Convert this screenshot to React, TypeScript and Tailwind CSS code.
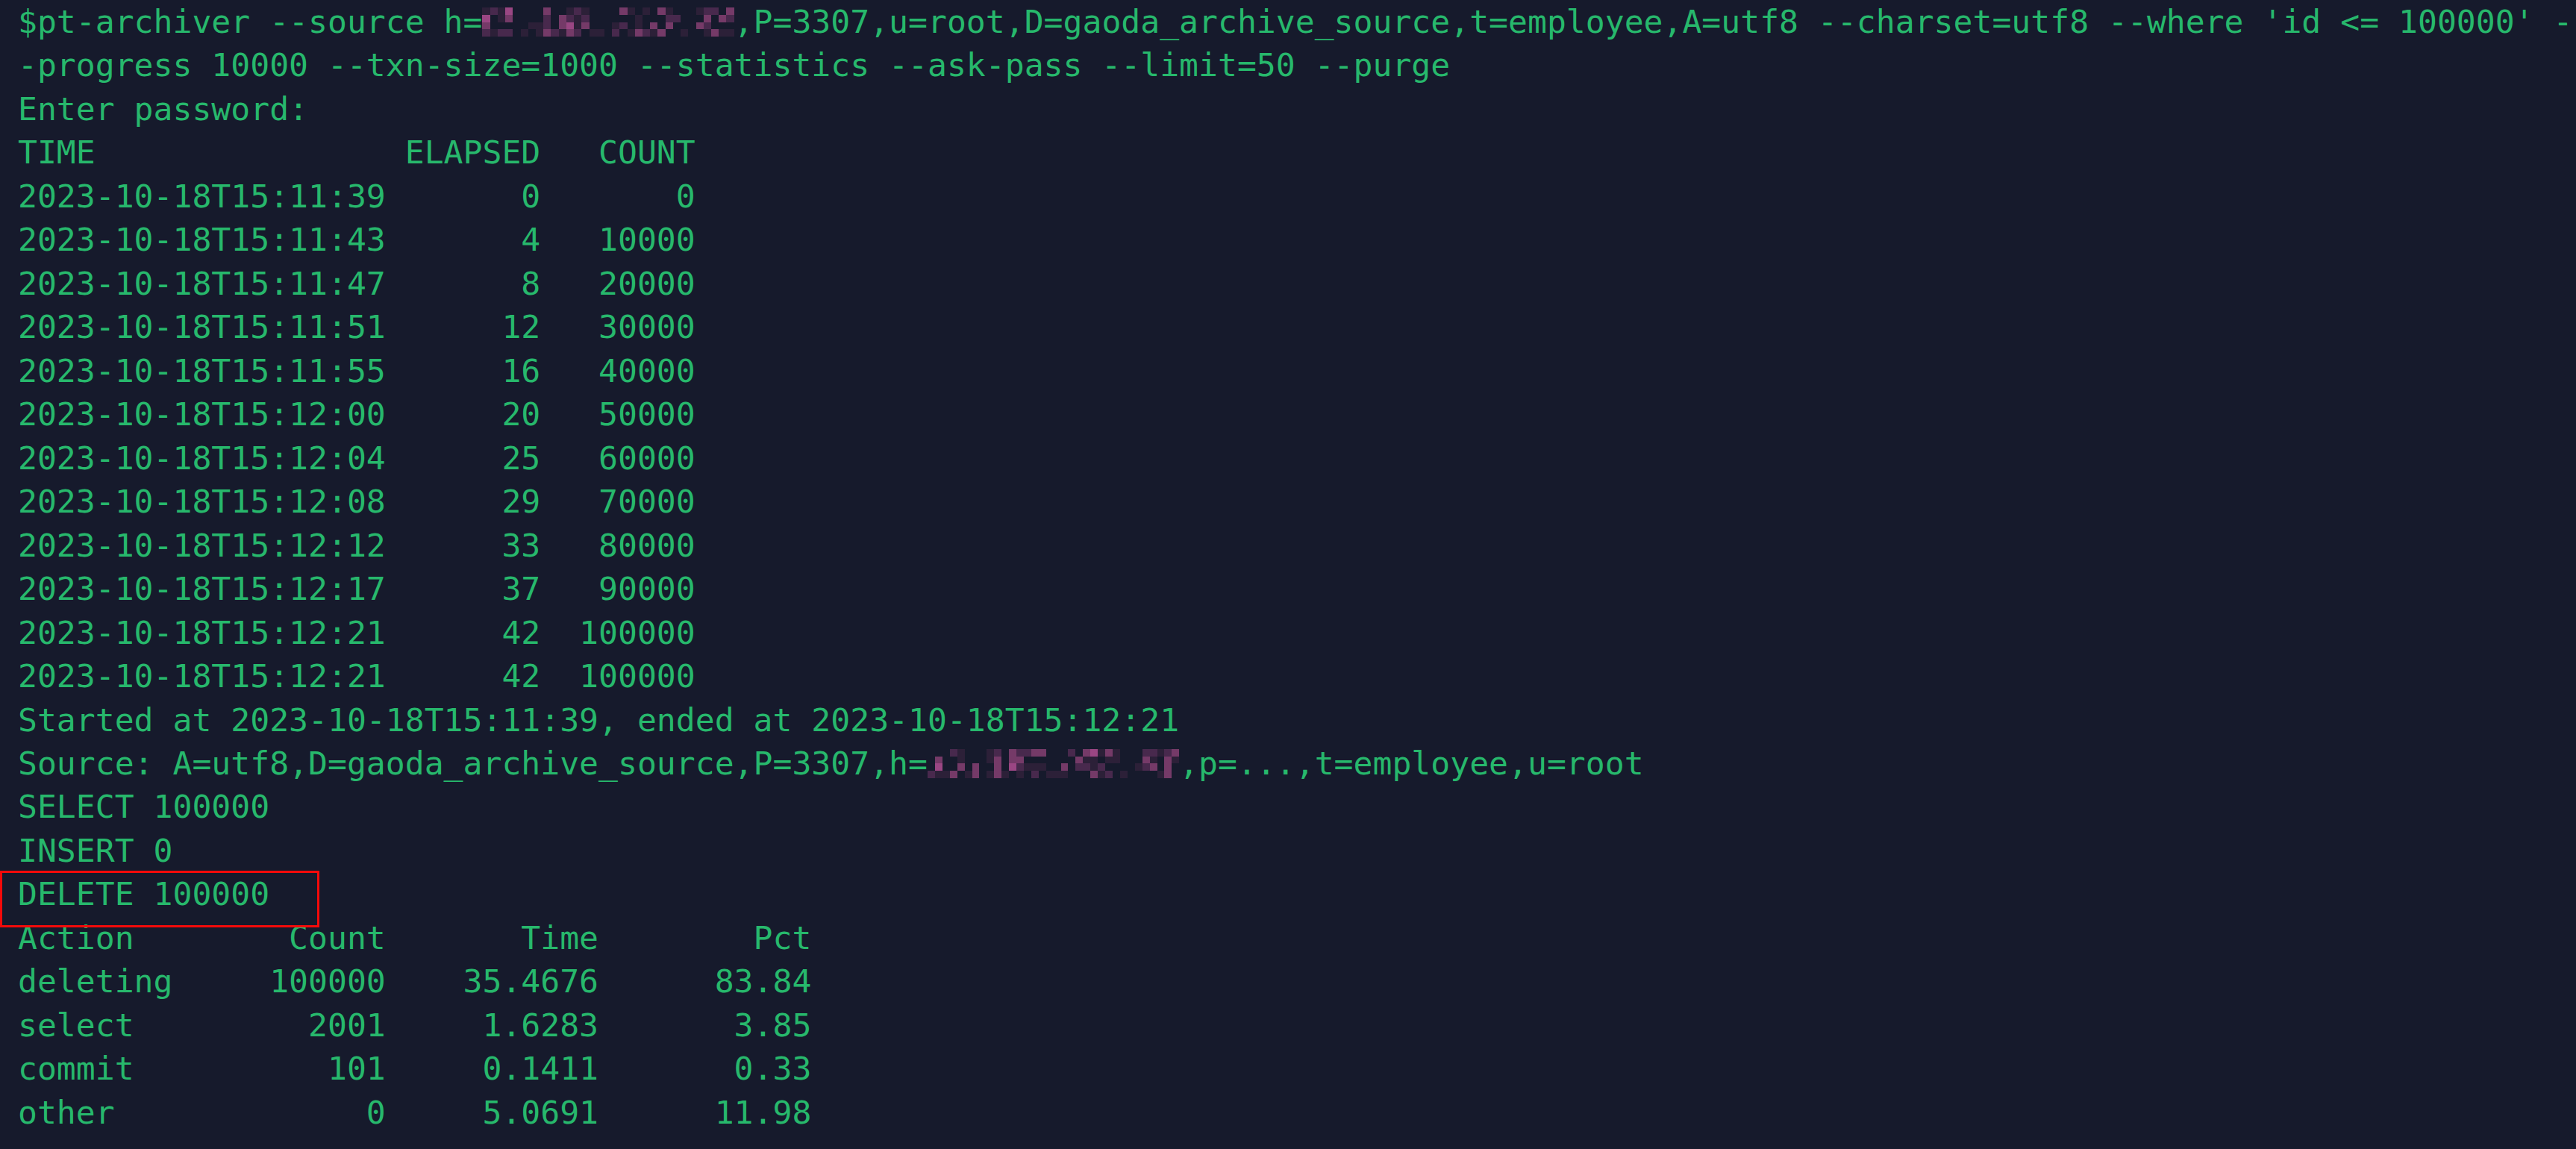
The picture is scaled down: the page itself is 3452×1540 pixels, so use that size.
import React from "react";

const LEVELS = ["transparent", "#2c2038", "#48294d", "#753a68", "#9a4683"];

const MOSAIC_A = [
  "121400003001210000310103100012203",
  "401300002032120000001000220003032",
  "300000112034130001201030300032000",
  "212201013213201102013213001001311",
];

const MOSAIC_B = [
  "0002100012032233000203413100022123",
  "0300100013033000000031101100031031",
  "0400303003042111003022120000123030",
  "2113013013101020111000312010000130",
];

function Mosaic({ rows }: { rows: string[] }) {
  return (
    <span className="inline-flex flex-col align-top w-[13ch] h-[58.47px] pt-[10px]">
      {rows.map((r, i) => (
        <span key={i} className="flex h-[9.75px]">
          {r.split("").map((c, j) => (
            <span
              key={j}
              className="flex-1"
              style={{ backgroundColor: LEVELS[Number(c)] }}
            />
          ))}
        </span>
      ))}
    </span>
  );
}

const padEnd = (s: string, n: number) => s + " ".repeat(Math.max(0, n - s.length));
const padStart = (s: string, n: number) => " ".repeat(Math.max(0, n - s.length)) + s;

const progress: [string, string, string][] = [
  ["2023-10-18T15:11:39", "0", "0"],
  ["2023-10-18T15:11:43", "4", "10000"],
  ["2023-10-18T15:11:47", "8", "20000"],
  ["2023-10-18T15:11:51", "12", "30000"],
  ["2023-10-18T15:11:55", "16", "40000"],
  ["2023-10-18T15:12:00", "20", "50000"],
  ["2023-10-18T15:12:04", "25", "60000"],
  ["2023-10-18T15:12:08", "29", "70000"],
  ["2023-10-18T15:12:12", "33", "80000"],
  ["2023-10-18T15:12:17", "37", "90000"],
  ["2023-10-18T15:12:21", "42", "100000"],
  ["2023-10-18T15:12:21", "42", "100000"],
];

const stats: [string, string, string, string][] = [
  ["Action", "Count", "Time", "Pct"],
  ["deleting", "100000", "35.4676", "83.84"],
  ["select", "2001", "1.6283", "3.85"],
  ["commit", "101", "0.1411", "0.33"],
  ["other", "0", "5.0691", "11.98"],
];

const progLine = (a: string, b: string, c: string) =>
  padEnd(a, 19) + " " + padStart(b, 7) + " " + padStart(c, 7);

const statLine = (a: string, b: string, c: string, d: string) =>
  padEnd(a, 9) + padStart(b, 10) + " " + padStart(c, 10) + " " + padStart(d, 10);

function Line({ children }: { children: React.ReactNode }) {
  return <div className="h-[58.47px] whitespace-pre">{children}</div>;
}

export default function App() {
  return (
    <div className="relative w-full min-h-screen h-[1540px] overflow-hidden bg-[#161a2c]">
      <div className="pl-[24px] text-[43.08px] leading-[58.47px] text-[#27b86c] font-['DejaVu_Sans_Mono','Liberation_Mono',monospace] antialiased">
        <Line>
          {"$pt-archiver --source h="}
          <Mosaic rows={MOSAIC_A} />
          {",P=3307,u=root,D=gaoda_archive_source,t=employee,A=utf8 --charset=utf8 --where 'id <= 100000' -"}
        </Line>
        <Line>{"-progress 10000 --txn-size=1000 --statistics --ask-pass --limit=50 --purge"}</Line>
        <Line>{"Enter password:"}</Line>
        <Line>{progLine("TIME", "ELAPSED", "COUNT")}</Line>
        {progress.map((p, i) => (
          <Line key={i}>{progLine(p[0], p[1], p[2])}</Line>
        ))}
        <Line>{"Started at 2023-10-18T15:11:39, ended at 2023-10-18T15:12:21"}</Line>
        <Line>
          {"Source: A=utf8,D=gaoda_archive_source,P=3307,h="}
          <Mosaic rows={MOSAIC_B} />
          {",p=...,t=employee,u=root"}
        </Line>
        <Line>{"SELECT 100000"}</Line>
        <Line>{"INSERT 0"}</Line>
        <Line>{"DELETE 100000"}</Line>
        {stats.map((s, i) => (
          <Line key={i}>{statLine(s[0], s[1], s[2], s[3])}</Line>
        ))}
      </div>
      <div className="absolute left-0 top-[1167px] w-[428px] h-[76px] border-[3px] border-[#f50a0a]" />
    </div>
  );
}
